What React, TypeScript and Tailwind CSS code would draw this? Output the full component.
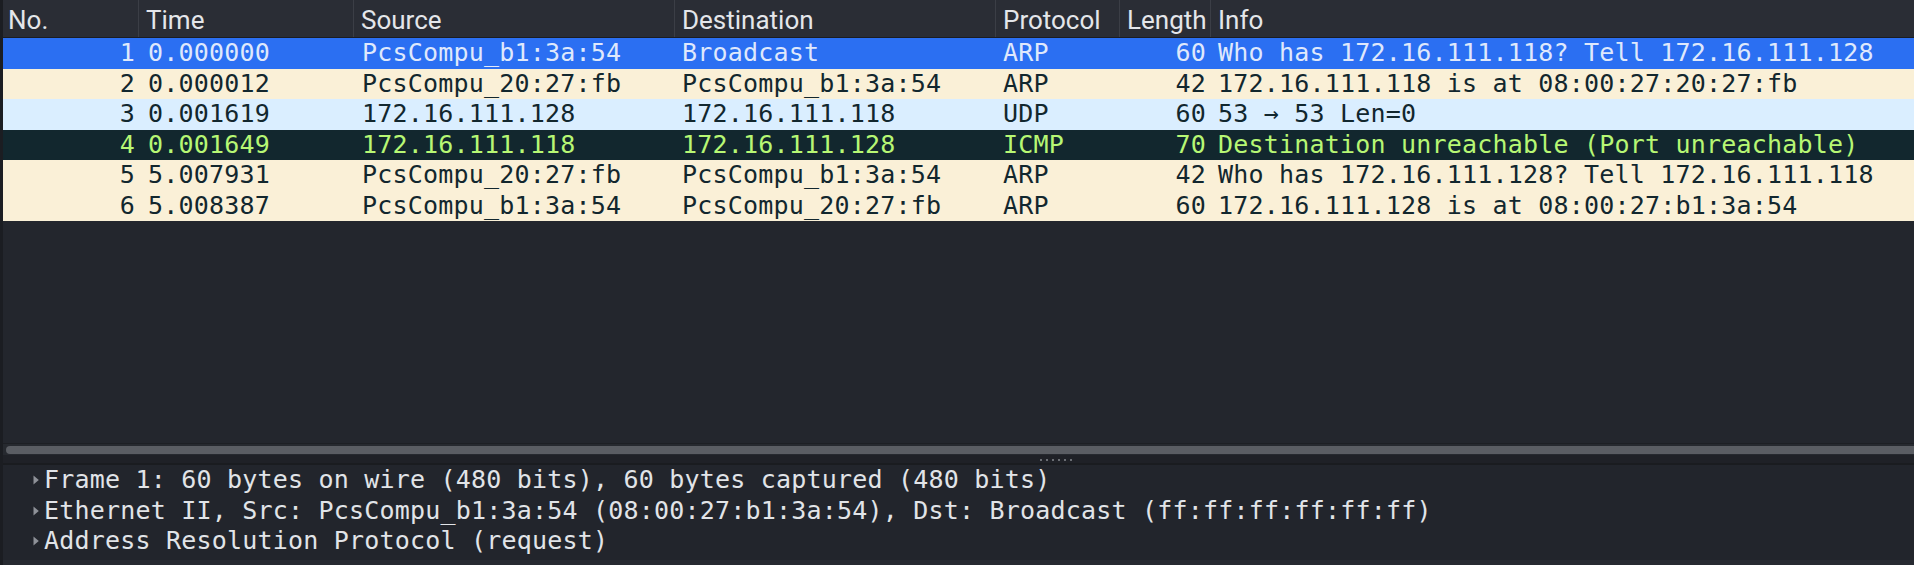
import React from 'react';

type Packet = {
  no: number;
  time: string;
  src: string;
  dst: string;
  proto: string;
  len: number;
  info: string;
  kind: 'sel' | 'arp' | 'udp' | 'icmp';
};

const PACKETS: Packet[] = [
  { no: 1, time: '0.000000', src: 'PcsCompu_b1:3a:54', dst: 'Broadcast', proto: 'ARP', len: 60, info: 'Who has 172.16.111.118? Tell 172.16.111.128', kind: 'sel' },
  { no: 2, time: '0.000012', src: 'PcsCompu_20:27:fb', dst: 'PcsCompu_b1:3a:54', proto: 'ARP', len: 42, info: '172.16.111.118 is at 08:00:27:20:27:fb', kind: 'arp' },
  { no: 3, time: '0.001619', src: '172.16.111.128', dst: '172.16.111.118', proto: 'UDP', len: 60, info: '53 → 53 Len=0', kind: 'udp' },
  { no: 4, time: '0.001649', src: '172.16.111.118', dst: '172.16.111.128', proto: 'ICMP', len: 70, info: 'Destination unreachable (Port unreachable)', kind: 'icmp' },
  { no: 5, time: '5.007931', src: 'PcsCompu_20:27:fb', dst: 'PcsCompu_b1:3a:54', proto: 'ARP', len: 42, info: 'Who has 172.16.111.128? Tell 172.16.111.118', kind: 'arp' },
  { no: 6, time: '5.008387', src: 'PcsCompu_b1:3a:54', dst: 'PcsCompu_20:27:fb', proto: 'ARP', len: 60, info: '172.16.111.128 is at 08:00:27:b1:3a:54', kind: 'arp' },
];

const ROW_STYLE: Record<Packet['kind'], string> = {
  sel: 'bg-[#2b6ff2] text-[#dfe8fc]',
  arp: 'bg-[#faf0d7] text-[#12272e]',
  udp: 'bg-[#daeeff] text-[#12272e]',
  icmp: 'bg-[#12272e] text-[#b7f774]',
};

const COLS = 'grid grid-cols-[135px_215px_321px_321px_124px_91px_1fr]';
const MONO = 'font-["DejaVu_Sans_Mono",monospace] text-[25px] tracking-[0.2px] leading-[30.5px]';

const HEADERS = ['No.', 'Time', 'Source', 'Destination', 'Protocol', 'Length', 'Info'];

const DETAILS = [
  'Frame 1: 60 bytes on wire (480 bits), 60 bytes captured (480 bits)',
  'Ethernet II, Src: PcsCompu_b1:3a:54 (08:00:27:b1:3a:54), Dst: Broadcast (ff:ff:ff:ff:ff:ff)',
  'Address Resolution Protocol (request)',
];

function Arrow() {
  return (
    <svg width="6" height="10" viewBox="0 0 6 10" className="shrink-0">
      <path d="M0.5 0.5 L5.8 5 L0.5 9.5 Z" fill="#8e9198" />
    </svg>
  );
}

export default function App() {
  return (
    <div className="w-[1914px] h-[565px] bg-[#23262d] flex flex-col overflow-hidden border-l-[3px] border-[#1b1d22]">
      {/* packet list */}
      <div className="h-[443px] flex flex-col">
        <div className={`${COLS} h-[38px] bg-[#2a2d35] border-b border-[#1b1d22] text-[#e4e6ea] font-["Roboto",sans-serif] text-[26px] leading-[40px] whitespace-nowrap`}>
          {HEADERS.map((h, i) => (
            <div key={h} className={`${i === 0 ? 'pl-[5px]' : 'pl-[7px] border-l border-[#3b3e46]'} overflow-hidden`}>
              {h}
            </div>
          ))}
        </div>
        {PACKETS.map((p) => (
          <div key={p.no} className={`${COLS} ${ROW_STYLE[p.kind]} ${MONO} h-[30.5px] whitespace-nowrap`}>
            <div className="text-right pr-[3px]">{p.no}</div>
            <div className="pl-[10px]">{p.time}</div>
            <div className="pl-[9px]">{p.src}</div>
            <div className="pl-[8px]">{p.dst}</div>
            <div className="pl-[8px]">{p.proto}</div>
            <div className="text-right pr-[4px]">{p.len}</div>
            <div className="pl-[8px] overflow-hidden">{p.info}</div>
          </div>
        ))}
      </div>

      {/* horizontal scrollbar */}
      <div className="h-[12px] bg-[#26292f] border-t border-[#1d1f24] flex items-center pl-[3px]">
        <div className="h-[8px] flex-1 rounded-l-full bg-[#5a5d63]" />
      </div>

      {/* splitter */}
      <div className="h-[10px] bg-[#1f2127] border-b-2 border-[#1a1c20] flex items-center justify-center pl-[194px] pt-[2px]">
        <div className="flex gap-[4px]">
          {[0, 1, 2, 3, 4, 5].map((d) => (
            <div key={d} className="w-[2px] h-[2px] bg-[#6a6d73]" />
          ))}
        </div>
      </div>

      {/* packet details */}
      <div className="flex-1 flex flex-col bg-[#22252c]">
        <div className="flex flex-col">
          {DETAILS.map((d) => (
            <div key={d} className={`flex items-center gap-[5px] pl-[30px] h-[30.5px] ${MONO} text-[#e1e4e8] whitespace-nowrap`}>
              <Arrow />
              <span>{d}</span>
            </div>
          ))}
        </div>
        <div className="flex-1 bg-[#272a31] mt-[3px]" />
      </div>
    </div>
  );
}
